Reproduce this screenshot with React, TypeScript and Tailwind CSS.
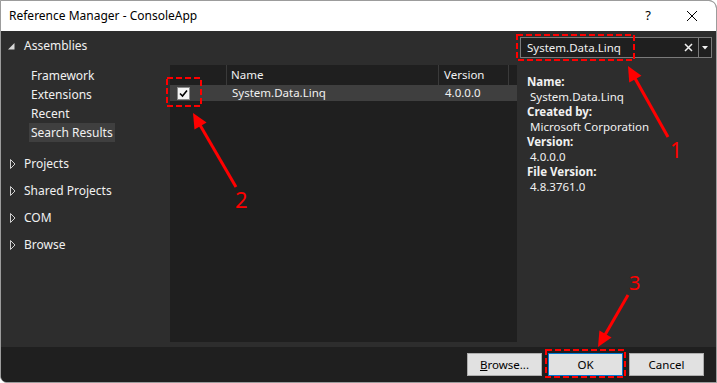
import React from "react";

type ArrowProps = { x1: number; y1: number; x2: number; y2: number };

// red annotation arrow, tail at (x1,y1), tip at (x2,y2)
function Arrow({ x1, y1, x2, y2 }: ArrowProps) {
  const dx = x2 - x1;
  const dy = y2 - y1;
  const len = Math.sqrt(dx * dx + dy * dy);
  const ux = dx / len;
  const uy = dy / len;
  const head = 15;
  const half = 7;
  const bx = x2 - ux * head;
  const by = y2 - uy * head;
  const pts = `${x2},${y2} ${bx - uy * half},${by + ux * half} ${bx + uy * half},${by - ux * half}`;
  return (
    <g>
      <line x1={x1} y1={y1} x2={bx + ux * 2} y2={by + uy * 2} stroke="#ff0000" strokeWidth={3} />
      <polygon points={pts} fill="#ff0000" />
    </g>
  );
}

function Collapsed() {
  return (
    <svg width="14" height="12" viewBox="0 0 14 12" className="shrink-0">
      <polygon points="1.5,1.5 6,6 1.5,10.5" fill="none" stroke="#d0d0d0" strokeWidth="1" />
    </svg>
  );
}

const treeTop = ["Framework", "Extensions", "Recent", "Search Results"];
const treeBottom = ["Projects", "Shared Projects", "COM", "Browse"];

export default function App() {
  return (
    <div className="relative w-[717px] h-[383px] overflow-hidden bg-white font-['Noto_Sans','Liberation_Sans',sans-serif] text-[11.5px]">
      <div className="flex flex-col h-full border border-[#9c9c9c] rounded-tr-[8px] rounded-bl-[7px] overflow-hidden bg-[#2d2d2d]">
        {/* Title bar */}
        <div className="h-[30px] bg-white flex items-center pl-[8px] text-black text-[12px] shrink-0">
          <span>Reference Manager - ConsoleApp</span>
          <span className="ml-auto text-[13px] mr-[35px]">?</span>
          <svg width="12" height="12" viewBox="0 0 12 12" className="mr-[18px]">
            <path d="M1 1 L11 11 M11 1 L1 11" stroke="#000" strokeWidth="1" />
          </svg>
        </div>

        {/* Main */}
        <div className="flex flex-1 min-h-0 text-[#f1f1f1]">
          {/* Tree */}
          <div className="w-[169px] shrink-0 pt-[5px] text-[12px]">
            <div className="h-[20px] flex items-center pl-[6px] gap-[8px]">
              <svg width="9" height="9" viewBox="0 0 9 9">
                <polygon points="7.5,1 7.5,7.5 1,7.5" fill="#d8d8d8" />
              </svg>
              <span>Assemblies</span>
            </div>
            <div className="mt-[10px] pl-[28px]">
              {treeTop.map((t) => (
                <div key={t} className="h-[19px] flex items-center">
                  <span className={t === "Search Results" ? "bg-[#3f3f3f] px-[2px] h-[19px] flex items-center" : "px-[2px]"}>{t}</span>
                </div>
              ))}
            </div>
            <div className="mt-[8px]">
              {treeBottom.map((t) => (
                <div key={t} className="h-[27px] flex items-center pl-[8px] gap-[1px]">
                  <Collapsed />
                  <span>{t}</span>
                </div>
              ))}
            </div>
          </div>

          {/* List */}
          <div className="w-[347px] shrink-0 pt-[34px] pb-[5px] flex flex-col">
            <div className="flex-1 bg-[#1f1f1f]">
              <div className="h-[20px] flex">
                <div className="w-[57px] border-r border-[#3a3a3a]" />
                <div className="w-[212px] border-r border-[#3a3a3a] pl-[4px] flex items-center">Name</div>
                <div className="w-[70px] border-r border-[#3a3a3a] pl-[5px] flex items-center">Version</div>
              </div>
              <div className="h-[16px] flex bg-[#3f3f3f]">
                <div className="w-[57px] pl-[7px] pt-[2px]">
                  <div className="w-[13px] h-[13px] bg-[#f4f4f4] border border-[#8a8a8a] flex items-center justify-center">
                    <svg width="9" height="9" viewBox="0 0 9 9">
                      <path d="M1 4.5 L3.5 7 L8 1.5" fill="none" stroke="#000" strokeWidth="1.6" />
                    </svg>
                  </div>
                </div>
                <div className="w-[212px] pl-[5px] flex items-center">System.Data.Linq</div>
                <div className="w-[70px] pl-[6px] flex items-center">4.0.0.0</div>
              </div>
            </div>
          </div>

          {/* Details */}
          <div className="flex-1 pt-[6px]">
            <div className="ml-[3px] mr-[4px] h-[21px] border border-[#7a7a7a] bg-[#1f1f1f] flex items-center">
              <span className="pl-[6px] flex-1">System.Data.Linq</span>
              <svg width="9" height="9" viewBox="0 0 9 9" className="mr-[5px]">
                <path d="M1 1 L8 8 M8 1 L1 8" stroke="#f1f1f1" strokeWidth="1.5" />
              </svg>
              <div className="w-[13px] h-full border-l border-[#7a7a7a] flex items-center justify-center">
                <svg width="6" height="4" viewBox="0 0 6 4">
                  <polygon points="0,0 6,0 3,3.5" fill="#f1f1f1" />
                </svg>
              </div>
            </div>
            <div className="mt-[16px] pl-[10px] leading-[15px]">
              <div className="font-bold">Name:</div>
              <div className="pl-[3px]">System.Data.Linq</div>
              <div className="font-bold">Created by:</div>
              <div className="pl-[3px]">Microsoft Corporation</div>
              <div className="font-bold">Version:</div>
              <div className="pl-[3px]">4.0.0.0</div>
              <div className="font-bold">File Version:</div>
              <div className="pl-[3px]">4.8.3761.0</div>
            </div>
          </div>
        </div>

        {/* Buttons */}
        <div className="h-[35px] shrink-0 bg-[#1f1f1f] flex items-center justify-end gap-[6px] pr-[12px]">
          <button className="w-[75px] h-[23px] bg-[#e1e1e1] border border-[#adadad] text-black">
            <span className="underline">B</span>rowse...
          </button>
          <button className="w-[75px] h-[23px] bg-[#e1e1e1] border border-[#0078d7] text-black">OK</button>
          <button className="w-[75px] h-[23px] bg-[#e1e1e1] border border-[#adadad] text-black">Cancel</button>
        </div>
      </div>

      {/* Annotations */}
      <svg className="absolute inset-0 pointer-events-none" width="717" height="383" viewBox="0 0 717 383">
        <g fill="none" stroke="#ff0000" strokeWidth="2" strokeDasharray="6 3">
          <rect x="517" y="35" width="117" height="25" />
          <rect x="167" y="78" width="34" height="28" />
          <rect x="546" y="350" width="79" height="27" />
        </g>
        <Arrow x1={668} y1={137} x2={628} y2={66} />
        <Arrow x1={236} y1={187} x2={193} y2={113} />
        <Arrow x1={628} y1={295} x2={598} y2={347} />
        <g fill="#ff0000" fontFamily="'Noto Sans', sans-serif">
          <text x="670" y="158" fontSize="21">1</text>
          <text x="235" y="208" fontSize="22">2</text>
          <text x="629" y="290" fontSize="20">3</text>
        </g>
      </svg>
    </div>
  );
}
